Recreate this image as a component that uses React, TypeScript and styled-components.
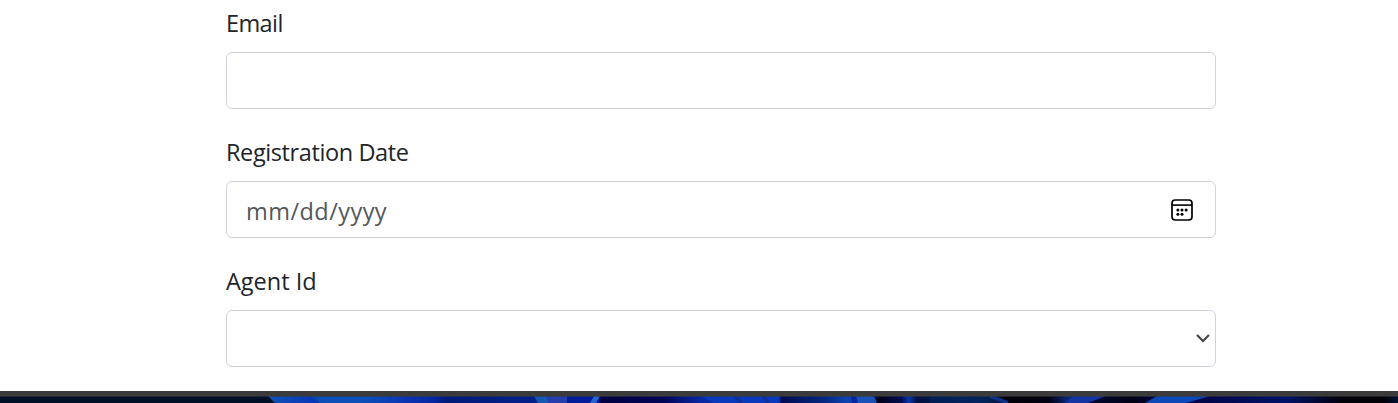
import React from 'react';
import styled, { createGlobalStyle } from 'styled-components';

const GlobalStyle = createGlobalStyle`
  * { box-sizing: border-box; }
  body {
    margin: 0;
    background: #fff;
    color: #212529;
    font-family: "Segoe UI", "Open Sans", "Noto Sans", sans-serif;
    overflow: hidden;
  }
`;

const Page = styled.div`
  display: flex;
  flex-direction: column;
  height: 403px;
`;

const Form = styled.form`
  flex: 1;
  min-height: 0;
  width: 990px;
  margin-left: 226px;
  padding-top: 6px;
`;

const Field = styled.div`
  margin-bottom: 26px;
`;

const Label = styled.label<{ $tracking: number }>`
  display: block;
  width: max-content;
  height: 36px;
  margin-bottom: 10px;
  font-size: 23.5px;
  line-height: 34px;
  white-space: nowrap;
  letter-spacing: ${(p) => p.$tracking}px;
`;

const Control = styled.div<{ $end: number }>`
  display: flex;
  align-items: center;
  justify-content: space-between;
  height: 57px;
  padding: 0 ${(p) => p.$end}px 0 19px;
  border: 1px solid #ced4da;
  border-radius: 6px;
  background: #fff;
`;

const Placeholder = styled.span`
  color: #53575a;
  font-size: 23.5px;
  line-height: 36px;
  padding-top: 3px;
  letter-spacing: 0.45px;
`;

const Calendar = styled.svg`
  display: block;
  margin-left: auto;
`;

const Chevron = styled.svg`
  display: block;
  margin-left: auto;
  margin-bottom: 1px;
`;

const WindowEdge = styled.div`
  height: 5px;
  background: #3b3b3b;
`;

const Wallpaper = styled.svg`
  display: block;
  width: 1398px;
  height: 7px;
`;

const dots = [[7.9, 12], [12, 12], [16.1, 12], [7.9, 16.2], [12, 16.2]];

export default function App() {
  return (
    <>
      <GlobalStyle />
      <Page>
        <Form>
          <Field>
            <Label $tracking={-0.6}>Email</Label>
            <Control $end={5} />
          </Field>
          <Field>
            <Label $tracking={-0.4}>Registration Date</Label>
            <Control $end={21}>
              <Placeholder>mm/dd/yyyy</Placeholder>
              <Calendar width="24" height="24" viewBox="0 0 24 24">
                <rect x="2" y="2" width="20" height="20" rx="3.2" fill="none" stroke="#000" strokeWidth="1.7" />
                <path d="M2 7.1H22" stroke="#000" strokeWidth="1.6" />
                {dots.map(([x, y]) => <circle key={`${x}-${y}`} cx={x} cy={y} r="1.5" />)}
              </Calendar>
            </Control>
          </Field>
          <Field>
            <Label $tracking={0}>Agent Id</Label>
            <Control $end={5}>
              <Chevron width="14" height="10" viewBox="0 0 14 10">
                <path d="M1 2L7 8L13 2" fill="none" stroke="#424649" strokeWidth="2.2" />
              </Chevron>
            </Control>
          </Field>
        </Form>
        <WindowEdge />
        <Wallpaper viewBox="0 0 1398 6" preserveAspectRatio="none">
          <defs>
            <linearGradient id="sky" gradientUnits="userSpaceOnUse" x1="0" x2="1398" y1="0" y2="0">
              <stop offset="0" stopColor="#000b1b" />
              <stop offset=".2" stopColor="#00102a" />
              <stop offset=".23" stopColor="#0b50b8" />
              <stop offset=".26" stopColor="#0b50b8" />
              <stop offset=".29" stopColor="#0b35b4" />
              <stop offset=".31" stopColor="#0526a0" />
              <stop offset=".32" stopColor="#001a78" />
              <stop offset=".39" stopColor="#00208c" />
              <stop offset=".428" stopColor="#0018a0" />
              <stop offset=".43" stopColor="#000040" />
              <stop offset=".475" stopColor="#000456" />
              <stop offset=".5" stopColor="#0827a0" />
              <stop offset=".557" stopColor="#0838bd" />
              <stop offset=".559" stopColor="#000b50" />
              <stop offset=".59" stopColor="#052880" />
              <stop offset=".605" stopColor="#0b43b0" />
              <stop offset=".62" stopColor="#0b43b8" />
              <stop offset=".628" stopColor="#000018" />
              <stop offset=".645" stopColor="#000d50" />
              <stop offset=".65" stopColor="#0838b0" />
              <stop offset=".656" stopColor="#001040" />
              <stop offset=".7" stopColor="#02245f" />
              <stop offset=".72" stopColor="#000006" />
              <stop offset=".75" stopColor="#000012" />
              <stop offset=".765" stopColor="#0a2a80" />
              <stop offset=".78" stopColor="#000830" />
              <stop offset=".81" stopColor="#000014" />
              <stop offset=".83" stopColor="#00063e" />
              <stop offset=".86" stopColor="#000548" />
              <stop offset=".92" stopColor="#001368" />
              <stop offset=".96" stopColor="#000009" />
              <stop offset=".99" stopColor="#000005" />
              <stop offset="1" stopColor="#001033" />
            </linearGradient>
            <linearGradient id="fold">
              <stop offset="0" stopColor="#1053b7" />
              <stop offset="1" stopColor="#0733b8" />
            </linearGradient>
          </defs>
          <rect width="1398" height="6" fill="url(#sky)" />
          <path d="M0 0H268L275 6H0Z" fill="#001027" />
          <path d="M268 0H310L320 6H275Z" fill="url(#fold)" />
          <path d="M534 0H567V6H538Z" fill="#1659b3" />
          <path d="M546 0H567V6H548Z" fill="#263dae" />
          <path d="M594 0H600L596 6H590Z" fill="#2367cd" />
          <path d="M700 0L714 6H780L776 0Z" fill="#0939bd" />
          <path d="M735 0L742 6M763 0L768 6" stroke="#102f99" strokeWidth="3" />
          <path d="M851 0H856L858 6H852Z" fill="#0825a0" />
          <path d="M856 0H874L877 6H858Z" fill="#1852b9" />
          <path d="M930 0H990L1008 6H930Z" fill="#02245f" opacity=".6" />
          <path d="M990 0L1008 6" stroke="#0c328a" strokeWidth="3" />
          <path d="M1073 0H1106L1088 6H1065Z" fill="#1434a4" />
          <path d="M1157 0H1210L1186 6H1145Z" fill="#0c48b7" />
          <rect width="1398" height="0.86" fill="#3b3b3b" opacity=".6" />
        </Wallpaper>
      </Page>
    </>
  );
}
